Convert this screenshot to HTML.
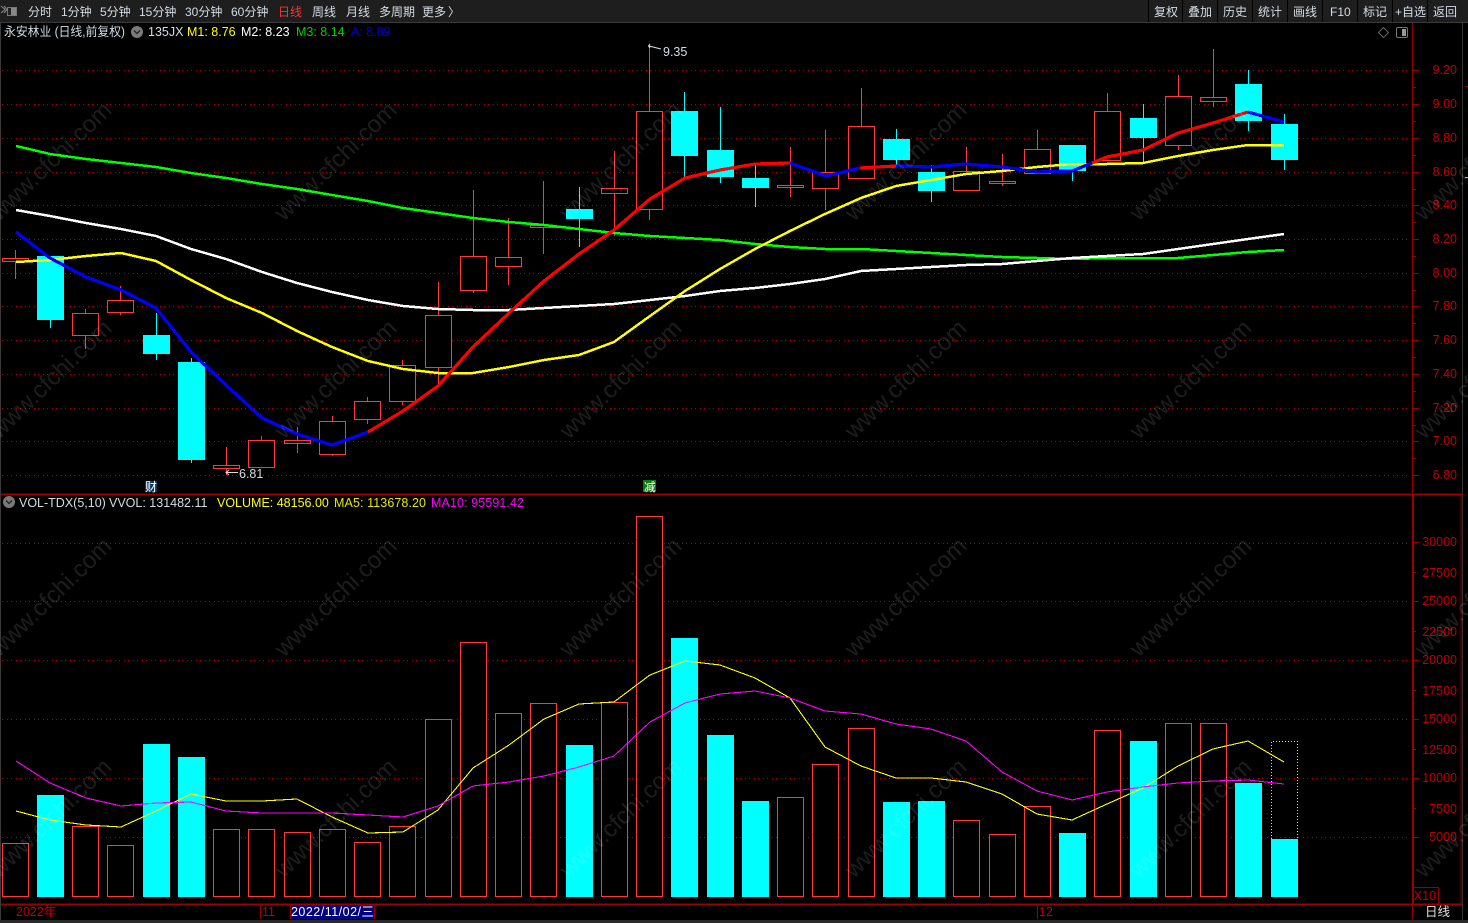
<!DOCTYPE html>
<html><head><meta charset="utf-8"><title>永安林业</title>
<style>
html,body{margin:0;padding:0;background:#000;width:1468px;height:923px;overflow:hidden}
svg{display:block;position:absolute;left:0;top:0}
text{font-family:"Liberation Sans","Noto Sans CJK SC",sans-serif;font-size:12.5px;fill:#d4dce4}
.tb text{font-size:12px}
.ax text{fill:#c00000;text-anchor:end}
.wm text{font-size:24px;fill:#fff;fill-opacity:.115}
.c{shape-rendering:crispEdges}
</style></head><body>
<svg width="1468" height="923" viewBox="0 0 1468 923" xmlns="http://www.w3.org/2000/svg">
<rect width="1468" height="923" fill="#000"/>
<!-- top bar -->
<g class="c">
<rect width="1468" height="22" fill="#1e1e1e"/>
<rect y="22" width="1468" height="1" fill="#3a3a3a"/>
<rect x="0" y="23" width="1" height="897" fill="#3a3a3a"/>
<path d="M1148.500 0V22M1182.500 0V22M1217.500 0V22M1252.500 0V22M1287.500 0V22M1322.500 0V22M1357.500 0V22M1392.500 0V22M1427.500 0V22" stroke="#000" stroke-width="1" fill="none"/>
<rect x="7.500" y="7.500" width="9" height="8" fill="#222" stroke="#777"/><rect x="11" y="8" width="5" height="7" fill="#888"/>
<rect x="1462" y="23" width="1" height="897" fill="#333"/>
<rect x="1465" y="86" width="3" height="1" fill="#a00000"/>
<rect x="1465" y="177" width="3" height="1" fill="#e0b040"/>
</g>
<path d="M1 6l4 3.500-4 3.500M4 6l3 3.500-3 3.500" stroke="#888" stroke-width="1" fill="none"/>
<g class="tb">
<text x="28" y="16">分时</text><text x="61" y="16">1分钟</text><text x="100" y="16">5分钟</text><text x="139" y="16">15分钟</text><text x="185" y="16">30分钟</text><text x="231" y="16">60分钟</text>
<text x="278" y="16" style="fill:#ff3232">日线</text><text x="312" y="16">周线</text><text x="346" y="16">月线</text><text x="379" y="16">多周期</text><text x="422" y="16">更多</text><text x="448" y="16">〉</text>
<text x="1154" y="16">复权</text><text x="1188" y="16">叠加</text><text x="1223" y="16">历史</text><text x="1258" y="16">统计</text><text x="1293" y="16">画线</text><text x="1330" y="16">F10</text><text x="1363" y="16">标记</text><text x="1395" y="16">+自选</text><text x="1433" y="16">返回</text>
</g>
<!-- grid -->
<g stroke="#b00000" stroke-width="1" stroke-dasharray="1 4 1 3" class="c" fill="none">
<path d="M2 70.500H1408M2 104.500H1408M2 138.500H1408M2 172.500H1408M2 205.500H1408M2 239.500H1408M2 273.500H1408M2 306.500H1408M2 340.500H1408M2 374.500H1408M2 408.500H1408M2 441.500H1408M2 475.500H1408"/>
<path d="M2 543.500H1408M2 601.500H1408M2 660.500H1408M2 719.500H1408M2 778.500H1408M2 837.500H1408"/>
</g>
<!-- axes -->
<g class="c" fill="none" stroke="#990000" stroke-width="1">
<path d="M1412.500 23V494"/>
<path d="M1413 495V905" stroke-width="2"/>
<path d="M1 494.500H1463" stroke-width="2"/>
<path d="M1 904.500H1462" stroke-width="2"/>
<path d="M1461 495V904" stroke="#7a0000" stroke-width="1"/>
<path d="M1412 70.500h7M1412 104.500h7M1412 138.500h7M1412 172.500h7M1412 205.500h7M1412 239.500h7M1412 273.500h7M1412 306.500h7M1412 340.500h7M1412 374.500h7M1412 408.500h7M1412 441.500h7M1412 475.500h7M1412 87.500h4M1412 121.500h4M1412 155.500h4M1412 189.500h4M1412 222.500h4M1412 256.500h4M1412 290.500h4M1412 323.500h4M1412 357.500h4M1412 391.500h4M1412 425.500h4M1412 458.500h4"/>
<path d="M1412 542.500h7M1412 572.500h4M1412 601.500h7M1412 631.500h4M1412 660.500h7M1412 690.500h4M1412 719.500h7M1412 749.500h4M1412 778.500h7M1412 808.500h4M1412 837.500h7"/>
<path d="M1413.500 904V887.500H1438.500V904"/>
<path d="M260.500 905V919M290.500 905V919M374.500 905V919M1037.500 905V919M1412.500 905V920"/>
</g>
<g class="ax">
<text x="1457" y="74">9.20</text><text x="1457" y="108">9.00</text><text x="1457" y="142">8.80</text><text x="1457" y="176">8.60</text><text x="1457" y="209">8.40</text><text x="1457" y="243">8.20</text><text x="1457" y="277">8.00</text><text x="1457" y="310">7.80</text><text x="1457" y="344">7.60</text><text x="1457" y="378">7.40</text><text x="1457" y="412">7.20</text><text x="1457" y="445">7.00</text><text x="1457" y="479">6.80</text>
<text x="1457" y="546">30000</text><text x="1457" y="577">27500</text><text x="1457" y="605">25000</text><text x="1457" y="636">22500</text><text x="1457" y="664">20000</text><text x="1457" y="695">17500</text><text x="1457" y="723">15000</text><text x="1457" y="754">12500</text><text x="1457" y="782">10000</text><text x="1457" y="813">7500</text><text x="1457" y="841">5000</text>
<text x="1436" y="900">X10</text>
</g>
<!-- candle wicks -->
<g class="c" fill="none" stroke-width="1">
<path stroke="#ff3838" d="M15.500 250V258M15.500 262V279M85.500 309V313M85.500 336V349M120.500 286V300M120.500 313V315M226.500 447V465M226.500 468V475M261.500 436V440M297.500 427V440M297.500 443V453M332.500 416V421M332.500 454V456M367.500 397V401M367.500 419V424M402.500 360V365M402.500 401V405M438.500 282V315M438.500 367V385M473.500 190V256M473.500 290V293M508.500 218V257M508.500 266V285M543.500 181V225M543.500 228V254M614.500 151V188M614.500 194V236M649.500 45V111M649.500 210V220M790.500 147V185M790.500 188V197M825.500 130V172M825.500 188V210M861.500 88V126M966.500 147V171M1002.500 154V181M1002.500 184V186M1037.500 130V149M1107.500 93V111M1178.500 75V96M1178.500 145V150M1213.500 49V97M1213.500 102V107"/>
<path stroke="#00ffff" d="M50.500 320V328M156.500 313V335M156.500 354V360M191.500 358V362M191.500 460V463M579.500 187V209M579.500 219V247M684.500 92V111M684.500 156V178M720.500 107V150M720.500 177V183M755.500 165V178M755.500 188V207M896.500 129V139M896.500 160V165M931.500 165V172M931.500 191V202M1072.500 171V181M1143.500 104V118M1143.500 138V163M1248.500 70V84M1248.500 121V131M1284.500 114V124M1284.500 160V170"/>
</g>
<!-- candle bodies -->
<g class="c" fill="#000" stroke="#ff3838" stroke-width="1">
<rect x="2.500" y="258.500" width="26" height="3"/><rect x="72.500" y="313.500" width="26" height="22"/><rect x="107.500" y="300.500" width="26" height="12"/><rect x="213.500" y="465.500" width="26" height="3"/><rect x="248.500" y="440.500" width="26" height="27"/><rect x="284.500" y="440.500" width="26" height="3"/><rect x="319.500" y="421.500" width="26" height="33"/><rect x="354.500" y="401.500" width="26" height="18"/><rect x="389.500" y="365.500" width="26" height="36"/><rect x="425.500" y="315.500" width="26" height="52"/><rect x="460.500" y="256.500" width="26" height="34"/><rect x="495.500" y="257.500" width="26" height="9"/><rect x="530.500" y="225.500" width="26" height="2"/><rect x="601.500" y="188.500" width="26" height="5"/><rect x="636.500" y="111.500" width="26" height="98"/><rect x="777.500" y="185.500" width="26" height="2"/><rect x="812.500" y="172.500" width="26" height="16"/><rect x="848.500" y="126.500" width="26" height="52"/><rect x="953.500" y="171.500" width="26" height="19"/><rect x="989.500" y="181.500" width="26" height="2"/><rect x="1024.500" y="149.500" width="26" height="24"/><rect x="1094.500" y="111.500" width="26" height="49"/><rect x="1165.500" y="96.500" width="26" height="49"/><rect x="1200.500" y="97.500" width="26" height="4"/>
</g>
<g class="c" fill="#00ffff">
<rect x="37" y="256" width="27" height="64"/><rect x="143" y="335" width="27" height="19"/><rect x="178" y="362" width="27" height="98"/><rect x="566" y="209" width="27" height="10"/><rect x="671" y="111" width="27" height="45"/><rect x="707" y="150" width="27" height="27"/><rect x="742" y="178" width="27" height="10"/><rect x="883" y="139" width="27" height="21"/><rect x="918" y="172" width="27" height="19"/><rect x="1059" y="145" width="27" height="26"/><rect x="1130" y="118" width="27" height="20"/><rect x="1235" y="84" width="27" height="37"/><rect x="1271" y="124" width="27" height="36"/>
</g>
<!-- MA lines -->
<g fill="none" stroke-width="2.500" stroke-linejoin="round" class="c">
<polyline stroke="#00ff00" points="16,146 50,154 86,159 121,163 156,167 191,173 226,178 262,184 297,189 332,195 368,201 403,208 438,213 473,218 509,222 544,225 579,229 614,233 650,236 685,238 720,240 755,244 790,247 825,249 861,249 896,251 931,253 966,255 1002,257 1037,258 1072,259 1107,258 1143,258 1178,258 1213,255 1248,252 1284,250"/>
<polyline stroke="#ffffff" points="16,210 50,216 86,223 121,229 156,236 191,249 226,259 262,272 297,283 332,292 368,300 403,306 438,309 473,310 509,310 544,308 579,306 614,304 650,300 685,296 720,291 755,288 790,284 825,279 861,271 896,269 931,267 966,265 1002,264 1037,261 1072,258 1107,256 1143,254 1178,249 1213,244 1248,239 1284,234"/>
<polyline stroke="#ffff00" points="16,262 50,260 86,256 121,253 156,261 191,280 226,298 262,313 297,331 332,347 368,361 403,369 438,373 473,373 509,367 544,360 579,355 614,342 650,316 685,291 720,269 755,249 790,231 825,214 861,198 896,186 931,180 966,174 1002,171 1037,167 1072,164 1107,164 1143,163 1178,156 1213,150 1248,145 1284,145"/>
<g stroke-width="3.200">
<polyline stroke="#0000ff" points="16,232 50,258 86,277 121,290 156,308 191,352 226,385 262,418 297,434 332,445 368,432"/>
<polyline stroke="#ff0000" points="368,432 403,411 438,386 473,347 509,313 544,281 579,254 614,230 650,199 685,178 720,170 755,164 790,163"/>
<polyline stroke="#0000ff" points="790,163 826,176 860,168"/>
<polyline stroke="#ff0000" points="860,168 896,166"/>
<polyline stroke="#0000ff" points="896,166 931,167 966,164 1002,167 1037,172 1072,171 1092,163"/>
<polyline stroke="#ff0000" points="1092,163 1107,157 1143,150 1178,133 1213,123 1248,112"/>
<polyline stroke="#0000ff" points="1248,112 1284,122"/>
</g>
</g>
<!-- volume -->
<g class="c" fill="#000" stroke="#ff3838" stroke-width="1">
<rect x="2.500" y="843.500" width="26" height="53"/><rect x="72.500" y="826.500" width="26" height="70"/><rect x="107.500" y="845.500" width="26" height="51"/><rect x="213.500" y="829.500" width="26" height="67"/><rect x="248.500" y="829.500" width="26" height="67"/><rect x="284.500" y="832.500" width="26" height="64"/><rect x="319.500" y="829.500" width="26" height="67"/><rect x="354.500" y="842.500" width="26" height="54"/><rect x="389.500" y="826.500" width="26" height="70"/><rect x="425.500" y="719.500" width="26" height="177"/><rect x="460.500" y="642.500" width="26" height="254"/><rect x="495.500" y="713.500" width="26" height="183"/><rect x="530.500" y="703.500" width="26" height="193"/><rect x="601.500" y="702.500" width="26" height="194"/><rect x="636.500" y="516.500" width="26" height="380"/><rect x="777.500" y="797.500" width="26" height="99"/><rect x="812.500" y="764.500" width="26" height="132"/><rect x="848.500" y="728.500" width="26" height="168"/><rect x="953.500" y="820.500" width="26" height="76"/><rect x="989.500" y="834.500" width="26" height="62"/><rect x="1024.500" y="806.500" width="26" height="90"/><rect x="1094.500" y="730.500" width="26" height="166"/><rect x="1165.500" y="723.500" width="26" height="173"/><rect x="1200.500" y="723.500" width="26" height="173"/>
</g>
<g class="c" fill="#00ffff">
<rect x="37" y="795" width="27" height="102"/><rect x="143" y="744" width="27" height="153"/><rect x="178" y="757" width="27" height="140"/><rect x="566" y="745" width="27" height="152"/><rect x="671" y="638" width="27" height="259"/><rect x="707" y="735" width="27" height="162"/><rect x="742" y="801" width="27" height="96"/><rect x="883" y="802" width="27" height="95"/><rect x="918" y="801" width="27" height="96"/><rect x="1059" y="833" width="27" height="64"/><rect x="1130" y="741" width="27" height="156"/><rect x="1235" y="783" width="27" height="114"/><rect x="1271" y="839" width="27" height="58"/>
</g>
<path class="c" d="M1271.500 839V741.500H1297.500V839" fill="none" stroke="#e8e840" stroke-dasharray="1 2"/>
<g fill="none" stroke-width="1.100" class="c">
<polyline stroke="#ffff00" points="16,811 50,820 86,825 121,827 156,811 191,794 226,801 262,801 297,799 332,817 368,833 403,832 438,810 473,768 509,745 544,719 579,704 614,702 650,675 685,661 720,665 755,678 790,698 825,747 861,766 896,778 931,778 966,782 1002,794 1037,814 1072,820 1107,804 1143,788 1178,766 1213,749 1248,741 1284,762"/>
<polyline stroke="#ff00ff" points="16,761 50,783 86,798 121,806 156,803 191,802 226,811 262,813 297,813 332,813 368,815 403,817 438,806 473,786 509,782 544,776 579,767 614,756 650,722 685,703 720,694 755,691 790,698 825,711 861,714 896,724 931,729 966,741 1002,772 1037,791 1072,800 1107,792 1143,787 1178,783 1213,781 1248,780 1284,784"/>
</g>
<!-- price header -->
<circle cx="137" cy="32" r="6" fill="#7a7a7a"/><path d="M134 30.500l3 3 3-3" stroke="#222" stroke-width="1.300" fill="none"/>
<text x="4" y="36" textLength="121" lengthAdjust="spacingAndGlyphs">永安林业 (日线,前复权)</text>
<text x="148" y="36">135JX</text>
<text x="187" y="36" style="fill:#ffff00">M1: 8.76</text>
<text x="241" y="36" style="fill:#ffffff">M2: 8.23</text>
<text x="296" y="36" style="fill:#00d000">M3: 8.14</text>
<text x="351" y="36" style="fill:#0000e0">A: 8.89</text>
<path d="M1383.500 27.500l5 5-5 5-5-5z" fill="none" stroke="#666"/>
<rect x="1396.500" y="27.500" width="11" height="10" rx="1.500" fill="#000" stroke="#777"/><rect x="1402" y="29" width="4" height="7" fill="#999"/>
<!-- labels -->
<path d="M650 44l-1.500 2 1.500 2M649 46l12 3" fill="none" stroke="#ddd"/>
<text x="663" y="56">9.35</text>
<path d="M238 472.500H226M229 470l-3 2.500 3 2.500" fill="none" stroke="#ddd"/>
<text x="239" y="478">6.81</text>
<rect x="145" y="481" width="12" height="11" fill="#0a3a66"/><text x="145" y="491" style="font-size:12px;fill:#fff">财</text>
<rect x="643" y="480" width="13" height="12" fill="#0a7a14"/><text x="644" y="491" style="font-size:11.500px;fill:#fff">减</text>
<!-- volume header -->
<circle cx="9" cy="502" r="6" fill="#7a7a7a"/><path d="M6 500.500l3 3 3-3" stroke="#222" stroke-width="1.300" fill="none"/>
<text x="19" y="507">VOL-TDX(5,10)</text>
<text x="109" y="507">VVOL: 131482.11</text>
<text x="217" y="507" style="fill:#ffff00">VOLUME: 48156.00</text>
<text x="334" y="507" textLength="92" style="fill:#e8e800">MA5: 113678.20</text>
<text x="431" y="507" textLength="93" style="fill:#ff00ff">MA10: 95591.42</text>
<!-- bottom -->
<text x="16" y="916" style="fill:#c00000">2022年</text>
<text x="262" y="916" style="fill:#c00000">11</text>
<rect x="291" y="906" width="83" height="13" fill="#000080"/>
<text x="291" y="916" textLength="83" style="fill:#fff">2022/11/02/三</text>
<text x="1039" y="916" style="fill:#c00000">12</text>
<text x="1425" y="916" style="fill:#e0e0e0">日线</text>
<g class="c"><rect y="920" width="1468" height="3" fill="#2a2a2a"/></g>
<!-- watermark -->
<g class="wm">
<text transform="translate(-1 222) rotate(-44)">www.cfchi.com</text><text transform="translate(284 222) rotate(-44)">www.cfchi.com</text><text transform="translate(569 222) rotate(-44)">www.cfchi.com</text><text transform="translate(854 222) rotate(-44)">www.cfchi.com</text><text transform="translate(1139 222) rotate(-44)">www.cfchi.com</text><text transform="translate(1424 222) rotate(-44)">www.cfchi.com</text>
<text transform="translate(-1 440) rotate(-44)">www.cfchi.com</text><text transform="translate(284 440) rotate(-44)">www.cfchi.com</text><text transform="translate(569 440) rotate(-44)">www.cfchi.com</text><text transform="translate(854 440) rotate(-44)">www.cfchi.com</text><text transform="translate(1139 440) rotate(-44)">www.cfchi.com</text><text transform="translate(1424 440) rotate(-44)">www.cfchi.com</text>
<text transform="translate(-1 658) rotate(-44)">www.cfchi.com</text><text transform="translate(284 658) rotate(-44)">www.cfchi.com</text><text transform="translate(569 658) rotate(-44)">www.cfchi.com</text><text transform="translate(854 658) rotate(-44)">www.cfchi.com</text><text transform="translate(1139 658) rotate(-44)">www.cfchi.com</text><text transform="translate(1424 658) rotate(-44)">www.cfchi.com</text>
<text transform="translate(-1 879) rotate(-44)">www.cfchi.com</text><text transform="translate(284 879) rotate(-44)">www.cfchi.com</text><text transform="translate(569 879) rotate(-44)">www.cfchi.com</text><text transform="translate(854 879) rotate(-44)">www.cfchi.com</text><text transform="translate(1139 879) rotate(-44)">www.cfchi.com</text><text transform="translate(1424 879) rotate(-44)">www.cfchi.com</text>
</g>
</svg>
</body></html>
